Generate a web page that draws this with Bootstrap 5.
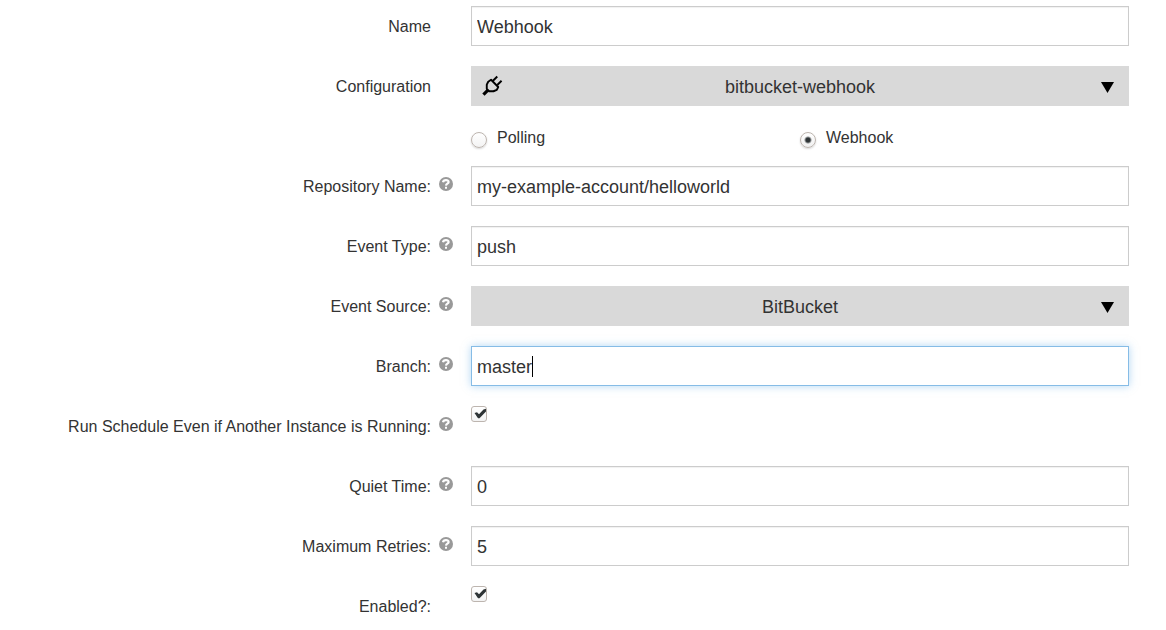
<!DOCTYPE html>
<html lang="en">
<head>
<meta charset="utf-8">
<meta name="viewport" content="width=device-width, initial-scale=1">
<title>Webhook schedule</title>
<link href="https://cdn.jsdelivr.net/npm/bootstrap@5.3.0/dist/css/bootstrap.min.css" rel="stylesheet">
<style>
  body { font-family: "Liberation Sans", Arial, sans-serif; font-size: 16px; line-height: 24px; color: #333; background: #fff; }
  .schedule-form { padding: 6px 37px 0 1px; overflow: hidden; }
  .field-row { min-height: 40px; margin-bottom: 20px; }
  .radio-row { margin-bottom: 16px; min-height: 24px; }
  .radio-pair { gap: 10px; }
  .label-cell { display: flex; justify-content: flex-end; padding: 9px 18px 0 0; }
  .help-slot { width: 14px; height: 14px; margin: 2px 0 0 8px; padding: 0; border: 0; background: none; flex: none; display: block; }
  .help-slot svg { display: block; }
  .field-box, .field-pick { height: 40px; border-radius: 0; font-size: 18px; line-height: 24px; color: #333; }
  .field-box, .field-box:focus { padding: 2px 5px 0; border: 1px solid #ccc; color: #333; box-shadow: inset 0 1px 1px rgba(0,0,0,.06); }
  .field-box.is-active, .field-box:focus { border-color: #86bce6; box-shadow: 0 0 8px rgba(102,175,233,.5); }
  .text-caret { position: absolute; left: 61px; top: 10px; width: 1px; height: 21px; background: #000; }
  .field-pick { padding: 2px 36px 0; border: 0; text-align: center; text-align-last: center; background-color: #d9d9d9;
    background-image: url("data:image/svg+xml,%3Csvg xmlns='http://www.w3.org/2000/svg' viewBox='0 0 13 11'%3E%3Cpath d='M0 0h13L6.500 11z'/%3E%3C/svg%3E");
    background-size: 13px 11px; background-position: right 15px top 16px; }
  .plug-icon { position: absolute; left: 11px; top: 9px; pointer-events: none; }
  .tick { appearance: none; width: 16px; height: 16px; margin: 0; flex: none; display: block; border: 1px solid #bdb5af; background: linear-gradient(#fff, #f3f3f3); }
  .tick-round { border-radius: 50%; margin-top: 6px; box-shadow: 0 1px 2px rgba(0,0,0,.16); }
  .tick-round:checked { background: radial-gradient(circle, #2e3436 0 2px, transparent 4px), linear-gradient(#fff, #f0f0f0); }
  .tick-square { border-radius: 3px; }
  .tick-square:checked { background: url("data:image/svg+xml,%3Csvg xmlns='http://www.w3.org/2000/svg' viewBox='0 0 14 14'%3E%3Cpath d='M2.500 6L5 5.200 7 7.200 11.500 2.500 14 1.800V4.500L7.500 11.300H6z' fill='%232e3436'/%3E%3C/svg%3E") center / 14px no-repeat, linear-gradient(#fff, #f3f3f3); }
</style>
</head>
<body>
<svg class="d-none" aria-hidden="true">
  <symbol id="help" viewBox="0 0 14 14">
    <circle cx="7" cy="7" r="7" fill="#999"/>
    <path d="M4 5.300C4.500 2.200 9.800 2.500 9.600 5.100C9.500 6.800 7.100 6.500 7 8.600" fill="none" stroke="#fff" stroke-width="2.200"/>
    <path d="M6 9.700h2v2H6z" fill="#fff"/>
  </symbol>
</svg>
<form class="schedule-form">
  <div class="row g-0 field-row">
    <div class="col-5 label-cell"><label for="name">Name</label><span class="help-slot"></span></div>
    <div class="col-7"><input class="form-control field-box" id="name" type="text" value="Webhook"></div>
  </div>
  <div class="row g-0 field-row">
    <div class="col-5 label-cell"><label for="config">Configuration</label><span class="help-slot"></span></div>
    <div class="col-7 position-relative">
      <select class="form-select field-pick" id="config"><option>bitbucket-webhook</option></select>
      <svg class="plug-icon" width="21" height="22" viewBox="0 0 22 22" fill="none" stroke="#000" stroke-width="2" aria-hidden="true">
        <path d="M1.500 20L6.500 15" stroke-width="3.400"/>
        <path d="M9.500 4.500L17 12L15.500 15L12 16.500H7.500L5 14V9.500L6.500 6.500Z" stroke-linejoin="round"/>
        <path d="M11.500 5.500L16 1M16 10L20.500 5.500"/>
      </svg>
    </div>
  </div>
  <div class="row g-0 radio-row">
    <div class="col-7 offset-5 d-flex">
      <div class="col-6 d-flex radio-pair"><input class="tick tick-round" type="radio" name="mode" id="polling"><label for="polling">Polling</label></div>
      <div class="col-6 d-flex radio-pair"><input class="tick tick-round" type="radio" name="mode" id="webhook" checked><label for="webhook">Webhook</label></div>
    </div>
  </div>
  <div class="row g-0 field-row">
    <div class="col-5 label-cell"><label for="repo">Repository Name:</label><button class="help-slot" type="button" aria-label="Help"><svg width="14" height="14"><use href="#help"/></svg></button></div>
    <div class="col-7"><input class="form-control field-box" id="repo" type="text" value="my-example-account/helloworld"></div>
  </div>
  <div class="row g-0 field-row">
    <div class="col-5 label-cell"><label for="event">Event Type:</label><button class="help-slot" type="button" aria-label="Help"><svg width="14" height="14"><use href="#help"/></svg></button></div>
    <div class="col-7"><input class="form-control field-box" id="event" type="text" value="push"></div>
  </div>
  <div class="row g-0 field-row">
    <div class="col-5 label-cell"><label for="source">Event Source:</label><button class="help-slot" type="button" aria-label="Help"><svg width="14" height="14"><use href="#help"/></svg></button></div>
    <div class="col-7"><select class="form-select field-pick" id="source"><option>BitBucket</option></select></div>
  </div>
  <div class="row g-0 field-row">
    <div class="col-5 label-cell"><label for="branch">Branch:</label><button class="help-slot" type="button" aria-label="Help"><svg width="14" height="14"><use href="#help"/></svg></button></div>
    <div class="col-7 position-relative"><input class="form-control field-box is-active" id="branch" type="text" value="master"><span class="text-caret"></span></div>
  </div>
  <div class="row g-0 field-row">
    <div class="col-5 label-cell"><label for="parallel">Run Schedule Even if Another Instance is Running:</label><button class="help-slot" type="button" aria-label="Help"><svg width="14" height="14"><use href="#help"/></svg></button></div>
    <div class="col-7"><input class="tick tick-square" id="parallel" type="checkbox" checked></div>
  </div>
  <div class="row g-0 field-row">
    <div class="col-5 label-cell"><label for="quiet">Quiet Time:</label><button class="help-slot" type="button" aria-label="Help"><svg width="14" height="14"><use href="#help"/></svg></button></div>
    <div class="col-7"><input class="form-control field-box" id="quiet" type="text" value="0"></div>
  </div>
  <div class="row g-0 field-row">
    <div class="col-5 label-cell"><label for="retries">Maximum Retries:</label><button class="help-slot" type="button" aria-label="Help"><svg width="14" height="14"><use href="#help"/></svg></button></div>
    <div class="col-7"><input class="form-control field-box" id="retries" type="text" value="5"></div>
  </div>
  <div class="row g-0 field-row mb-0">
    <div class="col-5 label-cell"><label for="enabled">Enabled?:</label><span class="help-slot"></span></div>
    <div class="col-7"><input class="tick tick-square" id="enabled" type="checkbox" checked></div>
  </div>
</form>
<script src="https://cdn.jsdelivr.net/npm/bootstrap@5.3.0/dist/js/bootstrap.bundle.min.js"></script>
</body>
</html>
